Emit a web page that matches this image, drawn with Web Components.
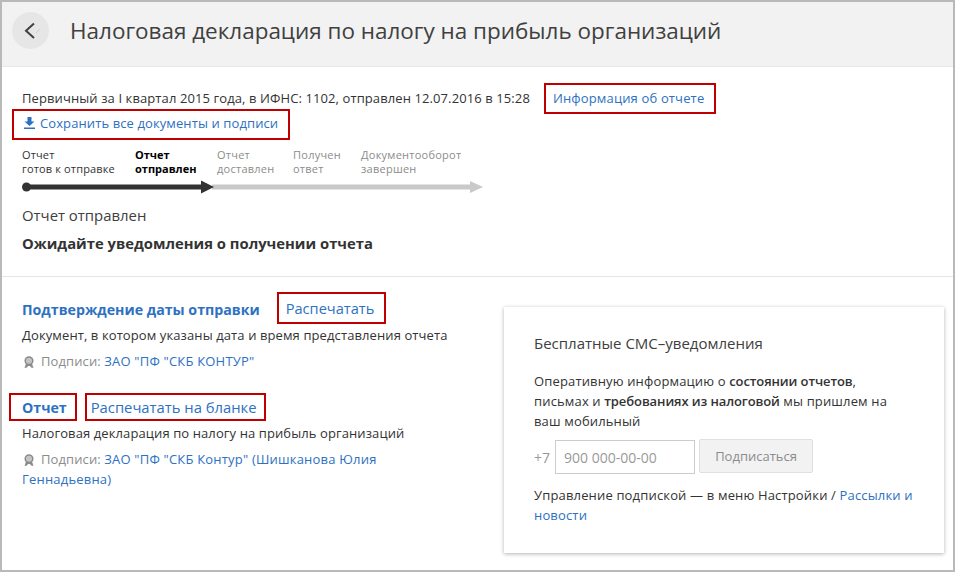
<!DOCTYPE html>
<html lang="ru">
<head>
<meta charset="utf-8">
<title>Налоговая декларация</title>
<style>
  html, body { margin: 0; background: #fff; }
  body { font-family: "Open Sans", "Liberation Sans", sans-serif; color: #333; }
</style>
</head>
<body>
<tax-page>
  <page-header slot="header">Налоговая декларация по налогу на прибыль организаций</page-header>
  <report-status slot="status"></report-status>
  <doc-entry slot="docs" title-text="Подтверждение даты отправки" print="Распечатать" desc="Документ, в котором указаны дата и время представления отчета" signer='ЗАО "ПФ "СКБ КОНТУР"'></doc-entry>
  <doc-entry slot="docs" marked title-text="Отчет" print="Распечатать на бланке" desc="Налоговая декларация по налогу на прибыль организаций" signer='ЗАО "ПФ "СКБ Контур" (Шишканова Юлия' signer-more="Геннадьевна)"></doc-entry>
  <sms-card slot="aside"></sms-card>
</tax-page>

<script>
// red annotation frame around a link
class RedMark extends HTMLElement {
  constructor() {
    super();
    this.attachShadow({ mode: "open" }).innerHTML = `
      <style>
        :host { display: inline-flex; align-items: center; box-sizing: border-box; border: 2px solid #c00000; }
      </style>
      <slot></slot>`;
  }
}

class TaxPage extends HTMLElement {
  constructor() {
    super();
    this.attachShadow({ mode: "open" }).innerHTML = `
      <style>
        :host { display: block; box-sizing: border-box; width: 955px; height: 572px; border: 2px solid #b9b9b9; overflow: hidden; background: #fff; }
        .lower { display: flex; align-items: flex-start; padding: 15px 9px 0 20px; }
        .docs { width: 482px; flex: none; display: flex; flex-direction: column; gap: 22px; }
        .aside { margin-top: 15px; }
      </style>
      <slot name="header"></slot>
      <slot name="status"></slot>
      <div class="lower">
        <div class="docs"><slot name="docs"></slot></div>
        <div class="aside"><slot name="aside"></slot></div>
      </div>`;
  }
}

class PageHeader extends HTMLElement {
  constructor() {
    super();
    this.attachShadow({ mode: "open" }).innerHTML = `
      <style>
        :host { display: flex; align-items: center; box-sizing: border-box; height: 65px; padding: 0 0 7px 10px; background: #f2f2f2; border-bottom: 1px solid #e8e8e8; }
        .back { width: 37px; height: 37px; border-radius: 50%; background: #e6e6e6; margin-right: 21px; flex: none; }
        .back svg { display: block; }
        h1 { margin: 1px 0 0; font: 400 22.46px/30px "Open Sans", sans-serif; color: #404040; white-space: nowrap; }
      </style>
      <div class="back">
        <svg width="37" height="37" viewBox="0 0 37 37" fill="none">
          <path d="M24 21 28 17" stroke="#cfcfcf"/>
          <path d="M22 11.500 14 18.700 22 26" stroke="#404040" stroke-width="2"/>
        </svg>
      </div>
      <h1><slot></slot></h1>`;
  }
}

class ReportStatus extends HTMLElement {
  constructor() {
    super();
    this.attachShadow({ mode: "open" }).innerHTML = `
      <style>
        :host { display: block; box-sizing: border-box; height: 210px; padding: 16px 20px 0; border-bottom: 1px solid #e6e6e6; font-size: 13px; letter-spacing: .1px; color: #333; }
        a { color: #2d71c2; text-decoration: none; }
        .meta { display: flex; align-items: center; height: 31px; white-space: nowrap; }
        .meta span { margin-top: -1px; }
        .meta red-mark { margin-left: 14px; height: 31px; padding: 0 10px 1px 7px; letter-spacing: .15px; }
        .save { margin: -5px 0 0 -10px; height: 31px; padding: 0 10px 3px; display: inline-flex; gap: 5px; }
        .save svg { flex: none; }
        .save-row { display: flex; }
        .now { margin: 11px 0 0; font-size: 14.9px; letter-spacing: 0; line-height: 20px; color: #404040; }
        .wait { margin: 8px 0 0; font-size: 14.8px; letter-spacing: 0; line-height: 20px; font-weight: 700; color: #333; }
      </style>
      <div class="meta">
        <span>Первичный за I квартал 2015 года, в ИФНС: 1102, отправлен 12.07.2016 в 15:28</span>
        <red-mark><a href="#">Информация об отчете</a></red-mark>
      </div>
      <div class="save-row">
        <red-mark class="save">
          <svg width="11" height="12" viewBox="0 0 11 12" fill="#2d71c2"><path d="M3.500 0h4v4.500H10.500L5.500 9 .5 4.500h3zM0 10.500h11V12H0z"/></svg>
          <a href="#">Сохранить все документы и подписи</a>
        </red-mark>
      </div>
      <status-steps></status-steps>
      <p class="now">Отчет отправлен</p>
      <p class="wait">Ожидайте уведомления о получении отчета</p>`;
  }
}

class StatusSteps extends HTMLElement {
  constructor() {
    super();
    const steps = [
      ["Отчет", "готов к отправке", "done", 113],
      ["Отчет", "отправлен", "cur", 82],
      ["Отчет", "доставлен", "", 76],
      ["Получен", "ответ", "", 68],
      ["Документооборот", "завершен", "", 122]
    ];
    this.attachShadow({ mode: "open" }).innerHTML = `
      <style>
        :host { display: block; margin-top: 8px; }
        .labels { display: flex; }
        .step { font-size: 11px; letter-spacing: .25px; line-height: 14px; color: #8c8c8c; white-space: nowrap; }
        .done { color: #333; letter-spacing: .15px; }
        .cur { color: #000; font-weight: 700; letter-spacing: 0; }
        svg { display: block; margin-top: 4px; }
      </style>
      <div class="labels">
        ${steps.map(([a, b, cls, w]) => `<div class="step ${cls}" style="width:${w}px">${a}<br>${b}</div>`).join("")}
      </div>
      <svg width="461" height="14" viewBox="0 0 461 14">
        <path d="M190 7H449" stroke="#c9c9c9" stroke-width="5"/>
        <path d="M448 1l13 6-13 6z" fill="#c9c9c9"/>
        <circle cx="4.500" cy="7" r="4.500" fill="#333"/>
        <path d="M4 7H181" stroke="#333" stroke-width="5"/>
        <path d="M179 .5l13 6.500-13 6.500z" fill="#333"/>
      </svg>`;
  }
}

class DocEntry extends HTMLElement {
  constructor() {
    super();
    const get = (n) => this.getAttribute(n);
    const marked = this.hasAttribute("marked");
    const more = get("signer-more");
    const title = `<a class="title" href="#">${get("title-text")}</a>`;
    this.attachShadow({ mode: "open" }).innerHTML = `
      <style>
        :host { display: block; font-size: 13px; letter-spacing: .1px; color: #333; }
        a { color: #2d71c2; text-decoration: none; }
        .head { display: flex; align-items: center; height: 32px; white-space: nowrap; letter-spacing: 0; }
        .title { font-size: 14.2px; font-weight: 700; margin-top: 2px; }
        .head red-mark { height: 32px; padding: 0 10px 0 7px; font-size: 14.6px; margin-left: 17px; }
        :host([marked]) .head { height: 28px; }
        :host([marked]) .head red-mark { height: 28px; padding: 0 7px 0 4px; margin-left: 0; font-size: 14.800px; }
        :host([marked]) .head .title-mark { margin: 0 8px 0 -13px; padding: 0 8px 1px 11px; }
        :host([marked]) .desc { margin-top: 2px; }
        p { margin: 0; line-height: 20px; }
        .desc { margin-top: 1px; }
        .sign { margin-top: 6px; max-width: 400px; }
        .sign span { color: #8c8c8c; }
        .sign a { letter-spacing: .2px; }
        .sign svg { vertical-align: -2px; margin: 0 7px 0 2px; }
      </style>
      <div class="head">
        ${marked ? `<red-mark class="title-mark">${title}</red-mark>` : title}
        <red-mark><a href="#">${get("print")}</a></red-mark>
      </div>
      <p class="desc">${get("desc")}</p>
      <p class="sign">
        <svg width="10" height="12" viewBox="0 0 10 12"><path d="M2 7.500.5 12l2.500-.5L4 10h2l1 1.500 2.500.5L8 7.500z" fill="#8c8c8c"/><circle cx="5" cy="4.700" r="3.800" fill="#c4c4c4" stroke="#8c8c8c" stroke-width="1.500"/></svg><span>Подписи:</span>
        <a href="#">${get("signer")}</a>${more ? `<br><a href="#">${more}</a>` : ""}
      </p>`;
  }
}

class SmsCard extends HTMLElement {
  constructor() {
    super();
    this.attachShadow({ mode: "open" }).innerHTML = `
      <style>
        :host { display: block; box-sizing: border-box; width: 440px; height: 246px; padding: 26px 30px 0; background: #fff; box-shadow: 0 1px 4px rgba(0,0,0,.3); font-size: 13px; letter-spacing: .15px; color: #333; }
        a { color: #2d71c2; text-decoration: none; }
        h2 { margin: 0; font-size: 15px; font-weight: 400; letter-spacing: 0; line-height: 20px; color: #404040; }
        p { margin: 0; line-height: 20px; }
        b { font-weight: 600; letter-spacing: -.1px; }
        .info { margin-top: 18px; }
        .form { display: flex; align-items: center; margin-top: 8px; }
        .code { color: #999; width: 21px; font-size: 14px; letter-spacing: 0; }
        input { box-sizing: border-box; width: 140px; height: 34px; border: 1px solid #ccc; padding: 0 8px; font: 14px "Open Sans", sans-serif; background: #fff; outline: none; }
        input::placeholder { color: #999; opacity: 1; }
        button { box-sizing: border-box; width: 114px; height: 34px; margin: 0 0 2px 4px; border: 1px solid #e0e0e0; border-radius: 2px; background: #f2f2f2; color: #8c8c8c; font: 13px "Open Sans", sans-serif; padding: 0; }
        .manage { margin-top: 10px; letter-spacing: .16px; }
      </style>
      <h2>Бесплатные СМС–уведомления</h2>
      <p class="info">Оперативную информацию о <b>состоянии отчетов</b>,<br>письмах и <b>требованиях из налоговой</b> мы пришлем на<br>ваш мобильный</p>
      <div class="form">
        <span class="code">+7</span>
        <input placeholder="900 000-00-00">
        <button type="button">Подписаться</button>
      </div>
      <p class="manage">Управление подпиской — в меню Настройки / <a href="#">Рассылки и</a><br><a href="#">новости</a></p>`;
  }
}

customElements.define("red-mark", RedMark);
customElements.define("tax-page", TaxPage);
customElements.define("page-header", PageHeader);
customElements.define("report-status", ReportStatus);
customElements.define("status-steps", StatusSteps);
customElements.define("doc-entry", DocEntry);
customElements.define("sms-card", SmsCard);
</script>
</body>
</html>
